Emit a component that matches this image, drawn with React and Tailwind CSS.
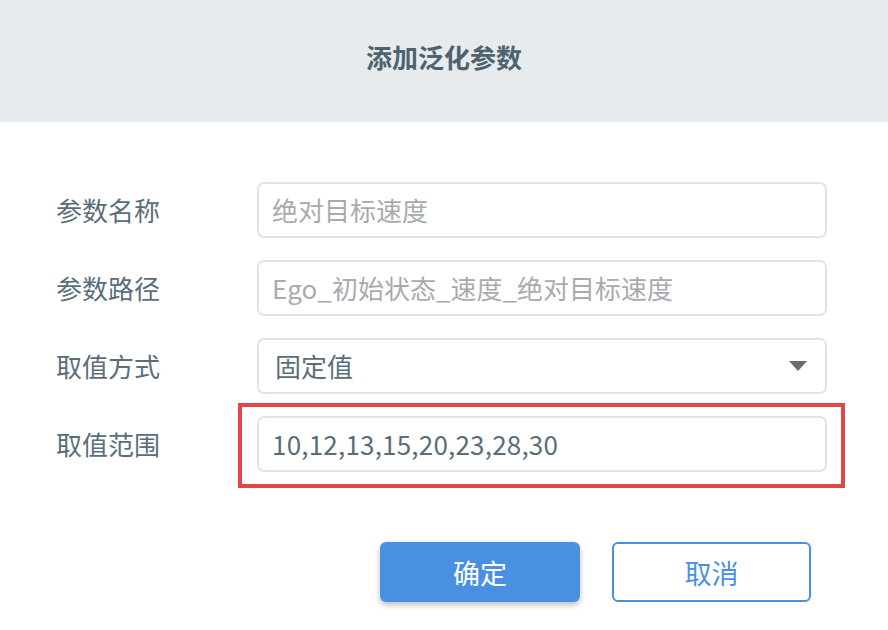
import React from 'react';

const fontStack = { fontFamily: '"Noto Sans CJK SC", "Noto Sans", sans-serif' };

function FieldRow({ label, children }) {
    return (
        <div className="flex items-center">
            <div className="w-[201px] shrink-0 text-[26px] text-[#5a6e7a] leading-none">{label}</div>
            <div className="relative w-[570px]">{children}</div>
        </div>
    );
}

function TextBox({ value, placeholder }) {
    return (
        <div className="h-[56px] rounded-[7px] border-2 border-[#e2e4e8] bg-white flex items-center px-[13px] text-[26px] leading-none">
            {value ? (
                <span className="text-[#5a6e7a] tracking-[0.2px]">{value}</span>
            ) : (
                <span className="text-[#a7abb0]">{placeholder}</span>
            )}
        </div>
    );
}

function SelectBox({ value }) {
    return (
        <div className="h-[56px] rounded-[7px] border-2 border-[#e2e4e8] bg-white flex items-center justify-between pl-[16px] pr-[18px] text-[26px] leading-none">
            <span className="text-[#5a6e7a]">{value}</span>
            <svg width="18" height="10" viewBox="0 0 18 10">
                <path d="M0 0 H18 L9 10 Z" fill="#6b6b6b" />
            </svg>
        </div>
    );
}

export default function App() {
    return (
        <div className="w-[888px] h-[630px] bg-white overflow-hidden" style={fontStack}>
            <div className="h-[122px] bg-[#e8ebee] flex items-center justify-center">
                <h1 className="text-[26px] font-bold text-[#4d6470] leading-none pb-[8px]">添加泛化参数</h1>
            </div>

            <div className="pl-[56px] pt-[60px] flex flex-col gap-[22px]">
                <FieldRow label="参数名称">
                    <TextBox placeholder="绝对目标速度" />
                </FieldRow>
                <FieldRow label="参数路径">
                    <TextBox placeholder="Ego_初始状态_速度_绝对目标速度" />
                </FieldRow>
                <FieldRow label="取值方式">
                    <SelectBox value="固定值" />
                </FieldRow>
                <FieldRow label="取值范围">
                    <TextBox value="10,12,13,15,20,23,28,30" />
                    {/* highlight frame around the range field */}
                    <div className="absolute -left-[19px] -right-[18px] -top-[13px] -bottom-[16px] border-4 border-[#e24646] pointer-events-none" />
                </FieldRow>
            </div>

            <div className="flex justify-end gap-[32px] pr-[77px] pt-[70px]">
                <button className="w-[200px] h-[60px] rounded-[6px] bg-[#4a90e2] text-white text-[27px] leading-none shadow-[0_3px_6px_rgba(0,0,0,0.25)]">
                    确定
                </button>
                <button className="w-[199px] h-[60px] rounded-[6px] border-2 border-[#4a90e2] bg-white text-[#4a90e2] text-[27px] leading-none">
                    取消
                </button>
            </div>
        </div>
    );
}
